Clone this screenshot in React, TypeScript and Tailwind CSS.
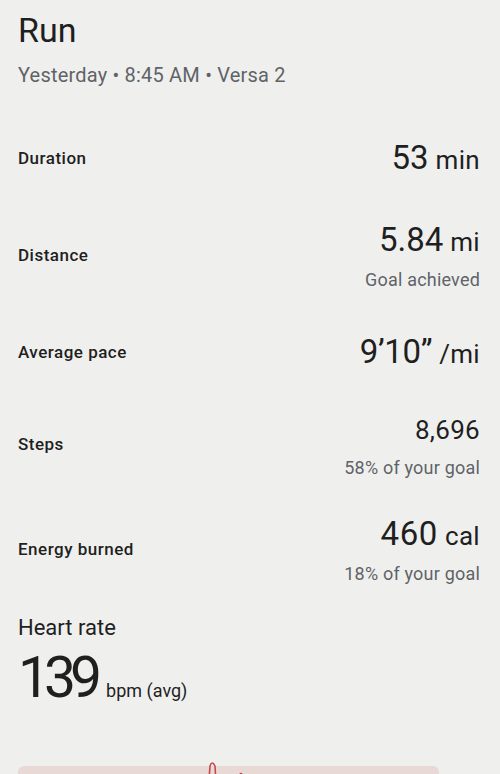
const stats = [
  { label: "Duration", value: "53", unit: "min", sub: "", rowClass: "mt-[49px]", valueClass: "text-[33px]" },
  { label: "Distance", value: "5.84", unit: "mi", sub: "Goal achieved", rowClass: "mt-[40px]", valueClass: "text-[33px]" },
  { label: "Average pace", value: "9’10”", unit: "/mi", sub: "", rowClass: "mt-[40px]", valueClass: "text-[33px] tracking-[-0.3px]" },
  { label: "Steps", value: "8,696", unit: "", sub: "58% of your goal", rowClass: "mt-[36px]", valueClass: "text-[26px] tracking-[0.3px]" },
  { label: "Energy burned", value: "460", unit: "cal", sub: "18% of your goal", rowClass: "mt-[34px]", valueClass: "text-[33px] tracking-[0.6px]" },
];

function StatRow({ stat }: { stat: (typeof stats)[number] }) {
  return (
    <div className={`flex items-center justify-between ${stat.rowClass}`}>
      <div className="text-[17px] font-medium tracking-[0.5px] text-[#1f1f1f]">{stat.label}</div>
      <div className="flex flex-col items-end">
        <div className="flex items-baseline gap-[7px] leading-[40px] text-[#1f1f1f]">
          <span className={stat.valueClass}>{stat.value}</span>
          {stat.unit && <span className="text-[26px] tracking-[0.3px]">{stat.unit}</span>}
        </div>
        {stat.sub && (
          <div className="mt-[6px] text-[18px] leading-[24px] tracking-[0.2px] text-[#5f6368]">{stat.sub}</div>
        )}
      </div>
    </div>
  );
}

export default function App() {
  return (
    <div className="h-[774px] w-[500px] overflow-hidden bg-[#eff0ee] pl-[18px] pr-[20px] font-['Roboto',sans-serif]">
      <div className="pt-[10px] text-[34px] leading-[40px] text-[#1f1f1f]">Run</div>
      <div className="mt-[11px] text-[20px] leading-[28px] tracking-[0.2px] text-[#5f6368]">Yesterday • 8:45 AM • Versa 2</div>

      <div>
        {stats.map((s) => (
          <StatRow key={s.label} stat={s} />
        ))}
      </div>

      <div className="mt-[27px] text-[22px] leading-[30px] text-[#1f1f1f]">Heart rate</div>
      <div className="mt-[5px] flex items-baseline gap-[10px] text-[#1f1f1f]">
        <span className="text-[57px] leading-[60px] tracking-[-6px]">139</span>
        <span className="text-[18px]">bpm (avg)</span>
      </div>

      <div className="relative mt-[58px] h-[40px] w-[421px] rounded-t-[6px] bg-[#e8d8d6]">
        <svg className="absolute left-0 top-[-6px] overflow-visible" width="421" height="46" viewBox="0 0 421 46">
          <path
            d="M188 46 L191 20 L192 6 Q194 0 197 6 L199 40 L203 44 Q215 48 220 20 Q223 8 225 18 L227 46"
            fill="none"
            stroke="#c9464b"
            strokeWidth="1.6"
            strokeLinejoin="round"
          />
        </svg>
      </div>
    </div>
  );
}
